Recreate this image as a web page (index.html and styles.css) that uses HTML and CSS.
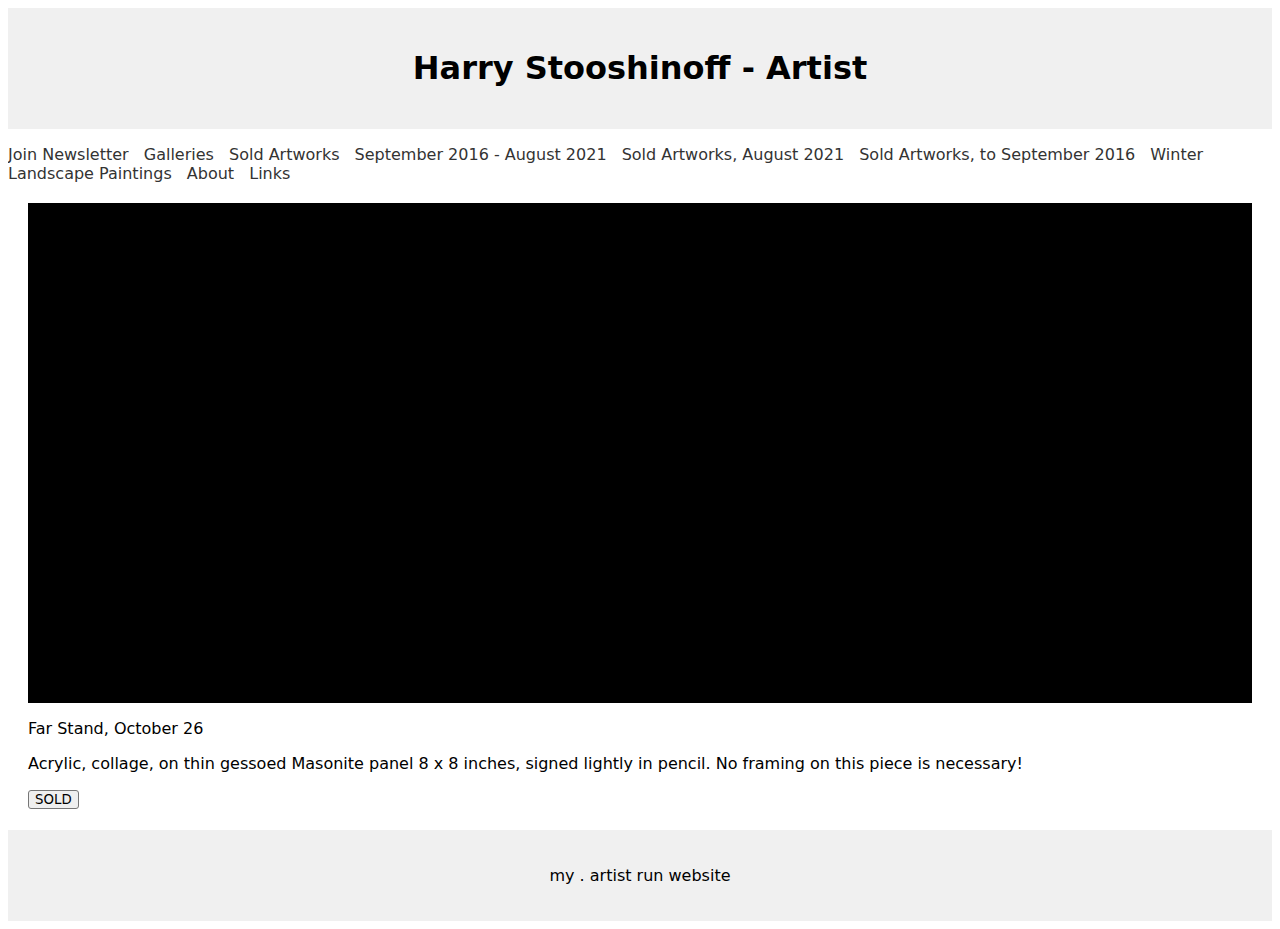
FILE: index.html
```html
<!DOCTYPE html>
<html>
<head>
<meta charset="utf-8">
<title>Harry Stooshinoff - Artist</title>
<link rel="stylesheet" href="styles.css">
</head>
<body>
<header class="site-header">
  <h1 class="site-title">Harry Stooshinoff - Artist</h1>
</header>
<nav class="site-nav">
  <a class="nav-link" href="#">Join Newsletter</a>
  <a class="nav-link" href="#">Galleries</a>
  <a class="nav-link" href="#">Sold Artworks</a>
  <a class="nav-link" href="#">September 2016 - August 2021</a>
  <a class="nav-link" href="#">Sold Artworks, August 2021</a>
  <a class="nav-link" href="#">Sold Artworks, to September 2016</a>
  <a class="nav-link" href="#">Winter Landscape Paintings</a>
  <a class="nav-link" href="#">About</a>
  <a class="nav-link" href="#">Links</a>
</nav>
<main class="artwork">
  <div class="artwork-image"></div>
  <p class="artwork-title">Far Stand, October 26</p>
  <p class="artwork-desc">Acrylic, collage, on thin gessoed Masonite panel 8 x 8 inches, signed lightly in pencil. No framing on this piece is necessary!</p>
  <div class="artwork-actions"><button class="sold-btn" type="button">SOLD</button></div>
</main>
<footer class="site-footer">
  <p class="footer-text">my . artist run website</p>
</footer>
</body>
</html>
```

FILE: styles.css
```css
body {
  margin: 8px;
  font-family: "DejaVu Sans", sans-serif;
  font-size: 16px;
  color: #000;
  background: #fff;
}
.site-header {
  background: #f0f0f0;
  padding: 20px;
  text-align: center;
}
.site-title {
  font-size: 32px;
  font-weight: bold;
  margin: 21.44px 0;
}
.site-nav {
  margin: 16px 0 20px;
}
.nav-link {
  color: #333;
  text-decoration: none;
  margin-right: 10px;
}
.artwork {
  padding: 0 20px 21px;
}
.artwork-image {
  height: 500px;
  background: #000;
}
.artwork-title,
.artwork-desc {
  margin: 16px 0;
}
.sold-btn {
  font-family: "DejaVu Sans", sans-serif;
  font-size: 13.33px;
  padding: 1px 6px;
  border: 1px solid #767676;
  border-radius: 3px;
  background: #efefef;
  color: #000;
}
.site-footer {
  background: #f0f0f0;
  padding: 20px;
  text-align: center;
}
.footer-text {
  margin: 16px 0;
}
```
